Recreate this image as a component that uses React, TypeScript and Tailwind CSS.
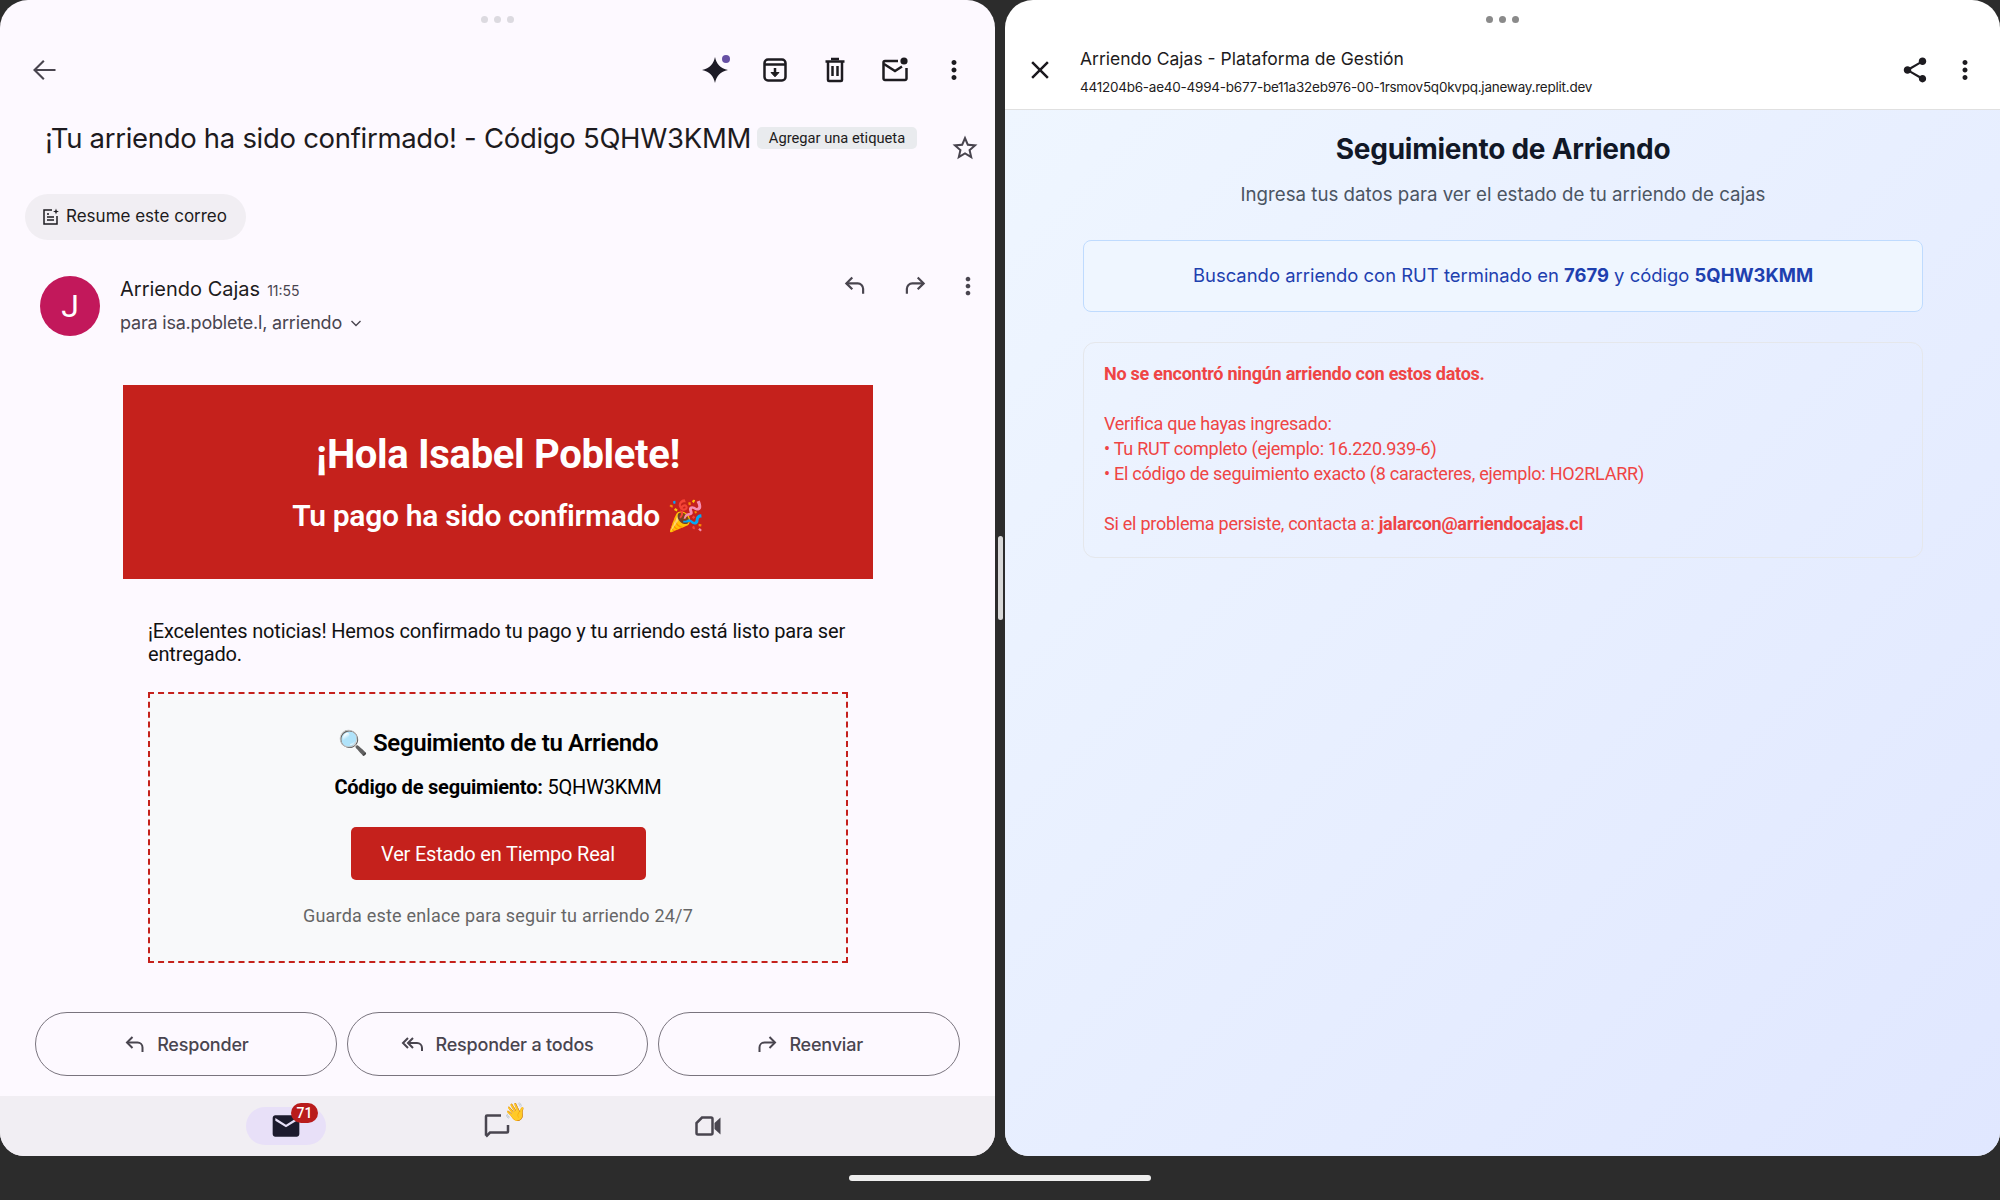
import { MdMoreVert, MdOutlineStarBorder, MdClose, MdShare, MdMail } from 'react-icons/md';

const gsans = "font-['Inter',sans-serif]";
const roboto = "font-['Roboto',sans-serif]";

function Dots({ color }: { color: string }) {
  return (
    <div className="h-[38px] flex items-center justify-center gap-[6px] shrink-0">
      <span className={`w-[7px] h-[7px] rounded-full ${color}`}></span>
      <span className={`w-[7px] h-[7px] rounded-full ${color}`}></span>
      <span className={`w-[7px] h-[7px] rounded-full ${color}`}></span>
    </div>
  );
}

function ReplyIcon({ size = 26, flip = false, color = '#49454f' }: { size?: number; flip?: boolean; color?: string }) {
  return (
    <svg width={size} height={size} viewBox="0 0 24 24" fill="none" stroke={color} strokeWidth="2" className={flip ? '-scale-x-100' : ''}>
      <path d="M9.5 5 4 10.5 9.5 16" />
      <path d="M4 10.5h10.5a5 5 0 0 1 5 5V20" />
    </svg>
  );
}

function ReplyAllIcon() {
  return (
    <svg width="24" height="24" viewBox="0 0 24 24" fill="none" stroke="#49454f" strokeWidth="2">
      <path d="M7 6 2 11l5 5" />
      <path d="M12 6l-5 5 5 5" />
      <path d="M7 11h9a5 5 0 0 1 5 5v3" />
    </svg>
  );
}

function ActionButton({ label, icon }: { label: string; icon: React.ReactNode }) {
  return (
    <button className={`flex-1 h-[64px] rounded-full border border-[#79747e] flex items-center justify-center gap-[10px] text-[18px] tracking-[-0.2px] font-medium text-[#49454f] ${gsans}`}>
      {icon}
      <span>{label}</span>
    </button>
  );
}

function Spark() {
  return (
    <div className="relative w-[30px] h-[30px]">
      <svg width="30" height="30" viewBox="0 0 30 30" fill="#1d1b26">
        <path d="M15 2c1.500 7.200 5.200 11.300 13 13-7.800 1.700-11.500 5.800-13 13-1.500-7.200-5.200-11.300-13-13 7.800-1.700 11.500-5.800 13-13z" />
      </svg>
      <span className="absolute top-0 left-[22px] w-[8px] h-[8px] rounded-full bg-[#6750a4]"></span>
    </div>
  );
}

function ArchiveIcon() {
  return (
    <svg width="30" height="30" viewBox="0 0 30 30" fill="none" stroke="#1d1b20" strokeWidth="2.500">
      <rect x="4.500" y="4.500" width="21" height="21" rx="3.500" />
      <path d="M5 9.500h20" />
      <path d="M15 13v7" />
      <path d="M11 17.500h8L15 21.800z" fill="#1d1b20" strokeWidth="1" />
    </svg>
  );
}

function TrashIcon() {
  return (
    <svg width="30" height="30" viewBox="0 0 30 30" fill="none" stroke="#1d1b20" strokeWidth="2.500">
      <path d="M5.500 6.500h19" />
      <path d="M11 4h8" />
      <path d="M8 6.500V25a1 1 0 0 0 1 1h12a1 1 0 0 0 1-1V6.500" />
      <path d="M12.500 11v10M17.500 11v10" />
    </svg>
  );
}

function MailDotIcon() {
  return (
    <svg width="30" height="30" viewBox="0 0 30 30" fill="none" stroke="#1d1b20" strokeWidth="2.500">
      <path d="M18 6H5a1.500 1.500 0 0 0-1.500 1.500v16A1.500 1.500 0 0 0 5 25h20a1.500 1.500 0 0 0 1.500-1.500V13" />
      <path d="M4 9l11 7 7-4.500" />
      <circle cx="24" cy="6" r="3.600" fill="#1d1b20" stroke="none" />
    </svg>
  );
}

function SummaryIcon() {
  return (
    <svg width="18" height="18" viewBox="0 0 18 18" fill="none" stroke="#1d1b20" strokeWidth="1.500">
      <path d="M10 2H2v14h13V8" />
      <path d="M5 6h2M5 9h7M5 12h7" />
      <path d="M14 0.500l.8 2.200 2.200.8-2.200.8-.8 2.200-.8-2.200-2.200-.8 2.200-.8z" fill="#1d1b20" stroke="none" />
    </svg>
  );
}

function ChatIcon() {
  return (
    <svg width="28" height="28" viewBox="0 0 28 28" fill="none" stroke="#49454f" strokeWidth="2.500">
      <path d="M3 23.500V4.500a1 1 0 0 1 1-1h14" />
      <path d="M25 13v6.500a1 1 0 0 1-1 1H7L3 24.500" />
    </svg>
  );
}

function VideoIcon() {
  return (
    <svg width="26" height="20" viewBox="0 0 26 20" fill="none" stroke="#49454f" strokeWidth="2.500">
      <path d="M7 1.500h9a1.500 1.500 0 0 1 1.500 1.500v14a1.500 1.500 0 0 1-1.500 1.500H3A1.500 1.500 0 0 1 1.500 17V7z" />
      <path d="M19.500 7 25.500 1.500v17L19.500 13z" fill="#49454f" stroke="none" />
    </svg>
  );
}

function LeftPane() {
  return (
    <div className="w-[995px] h-[1156px] shrink-0 rounded-t-[28px] rounded-b-[24px] overflow-hidden bg-[#fdf9ff] flex flex-col">
      <Dots color="bg-[#dcdae0]" />
      <div className="h-[64px] flex items-center pl-[31px] pr-[12px] shrink-0">
        <svg width="28" height="28" viewBox="0 0 24 24" fill="none" stroke="#49454f" strokeWidth="1.800">
          <path d="M11 4 3 12l8 8" />
          <path d="M3 12h18" />
        </svg>
        <div className="flex-1"></div>
        <div className="w-[60px] flex justify-center"><Spark /></div>
        <div className="w-[60px] flex justify-center"><ArchiveIcon /></div>
        <div className="w-[60px] flex justify-center"><TrashIcon /></div>
        <div className="w-[60px] flex justify-center"><MailDotIcon /></div>
        <div className="w-[58px] flex justify-center"><MdMoreVert size={30} color="#1d1b20" /></div>
      </div>

      <div className="flex items-start h-[44px] pl-[45px] mt-[18px] shrink-0">
        <h1 className={`text-[27.5px] leading-[36px] text-[#1d1b20] tracking-[-0.3px] whitespace-nowrap ${gsans}`}>¡Tu arriendo ha sido confirmado! - Código 5QHW3KMM</h1>
        <span className={`ml-[6px] mt-[7px] h-[22px] w-[160px] rounded-[5px] bg-[#e9ebee] text-[14.7px] leading-[22px] text-center text-[#1d1b20] shrink-0 ${roboto}`}>Agregar una etiqueta</span>
        <div className="flex-1"></div>
        <div className="w-[60px] flex justify-center mt-[13px]"><MdOutlineStarBorder size={30} color="#49454f" /></div>
      </div>

      <div className={`ml-[25px] mt-[30px] w-[221px] h-[46px] rounded-full bg-[#f1eef3] flex items-center gap-[6px] pl-[17px] text-[17px] text-[#1d1b20] shrink-0 ${gsans}`}>
        <SummaryIcon />
        <span>Resume este correo</span>
      </div>

      <div className="flex mt-[36px] pl-[40px] h-[60px] shrink-0">
        <div className={`w-[60px] h-[60px] rounded-full bg-[#c2185b] text-white text-[32px] flex items-center justify-center ${roboto}`}>J</div>
        <div className={`ml-[20px] ${gsans}`}>
          <div className="flex items-baseline h-[28px] mt-[-1px]">
            <span className="text-[20px] leading-[28px] text-[#1d1b20]">Arriendo Cajas</span>
            <span className="text-[14px] ml-[7px] text-[#49454f]">11:55</span>
          </div>
          <div className="flex items-center mt-[6px] text-[18px] leading-[28px] tracking-[-0.2px] text-[#49454f]">
            <span>para isa.poblete.l, arriendo</span>
            <svg width="14" height="14" viewBox="0 0 14 14" fill="none" stroke="#49454f" strokeWidth="1.400" className="ml-[7px]"><path d="M2.500 5 7 9.500 11.500 5" /></svg>
          </div>
        </div>
        <div className="flex-1"></div>
        <div className="flex items-start gap-[34px] pr-[13px] mt-[-4px]">
          <ReplyIcon />
          <ReplyIcon flip />
          <MdMoreVert size={28} color="#49454f" className="ml-[-8px]" />
        </div>
      </div>

      <div className={`w-[750px] ml-[123px] mt-[49px] h-[194px] shrink-0 bg-[#c5211c] text-white text-center flex flex-col items-center pt-[45px] ${roboto}`}>
        <h2 className="text-[40px] leading-[50px] font-bold tracking-[-0.33px]">¡Hola Isabel Poblete!</h2>
        <p className="text-[30px] leading-[40px] font-semibold tracking-[-0.3px] mt-[16px]">Tu pago ha sido confirmado 🎉</p>
      </div>

      <p className={`ml-[148px] w-[700px] mt-[41px] text-[20px] leading-[23px] tracking-[-0.15px] text-[#111] shrink-0 ${roboto}`}>¡Excelentes noticias! Hemos confirmado tu pago y tu arriendo está listo para ser entregado.</p>

      <div className={`ml-[148px] w-[700px] h-[271px] mt-[26px] shrink-0 border-2 border-dashed border-[#c5211c] bg-[#f8f9fa] flex flex-col items-center text-center ${roboto}`}>
        <h3 className="text-[24px] leading-[30px] font-semibold tracking-[-0.35px] text-black mt-[34px]">🔍 Seguimiento de tu Arriendo</h3>
        <p className="text-[20px] leading-[26px] tracking-[-0.2px] text-black mt-[16px]"><strong className="font-bold">Código de seguimiento:</strong> 5QHW3KMM</p>
        <button className="mt-[27px] w-[295px] h-[53px] rounded-[5px] bg-[#c5211c] text-white text-[20px] tracking-[-0.2px]">Ver Estado en Tiempo Real</button>
        <p className="text-[18px] leading-[24px] tracking-[0.2px] text-[#666] mt-[24px]">Guarda este enlace para seguir tu arriendo 24/7</p>
      </div>

      <div className="flex-1"></div>

      <div className="flex gap-[10px] px-[35px] shrink-0">
        <ActionButton label="Responder" icon={<ReplyIcon size={24} />} />
        <ActionButton label="Responder a todos" icon={<ReplyAllIcon />} />
        <ActionButton label="Reenviar" icon={<ReplyIcon size={24} flip />} />
      </div>

      <div className="h-[60px] mt-[20px] bg-[#f1eef3] shrink-0 flex items-center">
        <div className="ml-[246px] w-[80px] h-[38px] rounded-full bg-[#e8e0f8] relative flex items-center justify-center">
          <MdMail size={32} color="#1d1b2e" />
          <span className={`absolute -top-[4px] left-[45px] w-[27px] h-[20px] rounded-full bg-[#b91c1c] text-white text-[14px] leading-[20px] text-center font-medium ${roboto}`}>71</span>
        </div>
        <div className="ml-[157px] w-[28px] h-[28px] relative">
          <ChatIcon />
          <span className="absolute -top-[12px] left-[21px] text-[18px] leading-[22px]">👋</span>
        </div>
        <div className="ml-[184px]"><VideoIcon /></div>
      </div>
    </div>
  );
}

function RightPane() {
  return (
    <div className="w-[995px] h-[1156px] shrink-0 rounded-t-[28px] rounded-b-[24px] overflow-hidden bg-white flex flex-col">
      <Dots color="bg-[#8a8a8a]" />
      <div className="h-[72px] flex items-start border-b border-[#e0e0e0] shrink-0">
        <div className="w-[70px] h-[64px] flex items-center justify-center"><MdClose size={30} color="#1d1b20" /></div>
        <div className={`ml-[5px] ${gsans}`}>
          <div className="text-[17.5px] leading-[26px] mt-[8px] text-[#1d1b20]">Arriendo Cajas - Plataforma de Gestión</div>
          <div className="text-[13.5px] leading-[20px] mt-[5px] text-[#1d1b20] tracking-[-0.24px]">441204b6-ae40-4994-b677-be11a32eb976-00-1rsmov5q0kvpq.janeway.replit.dev</div>
        </div>
        <div className="flex-1"></div>
        <div className="w-[50px] h-[64px] flex items-center justify-center"><MdShare size={30} color="#1d1b20" /></div>
        <div className="w-[50px] h-[64px] flex items-center justify-center mr-[10px]"><MdMoreVert size={30} color="#1d1b20" /></div>
      </div>
      <div className="flex-1 bg-gradient-to-br from-[#eff6ff] to-[#e0e7ff] pl-[78px] pr-[77px] pt-[18px]">
        <h1 className="text-[28px] leading-[42px] font-bold tracking-[-0.25px] text-center text-[#111827] font-['Inter',sans-serif]">Seguimiento de Arriendo</h1>
        <p className="text-[18.7px] leading-[28px] text-center text-[#4b5563] mt-[11px] font-['Inter',sans-serif]">Ingresa tus datos para ver el estado de tu arriendo de cajas</p>
        <div className="mt-[31px] h-[72px] rounded-[8px] border border-[#bfdbfe] bg-[#eff6ff] flex items-center justify-center text-[18.45px] text-[#1e40af] font-['Inter',sans-serif]">
          <span>Buscando arriendo con RUT terminado en <strong className="font-bold">7679</strong> y código <strong className="font-bold">5QHW3KMM</strong></span>
        </div>
        <div className={`mt-[30px] rounded-[12px] border border-[#e5e7eb] pt-[18px] pb-[21px] px-[20px] text-[18px] leading-[25px] tracking-[-0.25px] text-[#ef4444] ${roboto}`}>
          <p className="font-bold">No se encontró ningún arriendo con estos datos.</p>
          <br />
          <p>Verifica que hayas ingresado:</p>
          <p>• Tu RUT completo (ejemplo: 16.220.939-6)</p>
          <p>• El código de seguimiento exacto (8 caracteres, ejemplo: HO2RLARR)</p>
          <br />
          <p>Si el problema persiste, contacta a: <strong className="font-bold">jalarcon@arriendocajas.cl</strong></p>
        </div>
      </div>
    </div>
  );
}

export default function App() {
  return (
    <div className="w-[2000px] h-[1200px] bg-[#2c2c2c] overflow-hidden flex flex-col">
      <div className="flex h-[1156px]">
        <LeftPane />
        <div className="w-[10px] flex items-center justify-center">
          <div className="w-[5px] h-[84px] rounded-full bg-[#d8d8d8]"></div>
        </div>
        <RightPane />
      </div>
      <div className="flex-1 flex items-center justify-center">
        <div className="w-[302px] h-[6px] rounded-full bg-[#eeeeee]"></div>
      </div>
    </div>
  );
}
